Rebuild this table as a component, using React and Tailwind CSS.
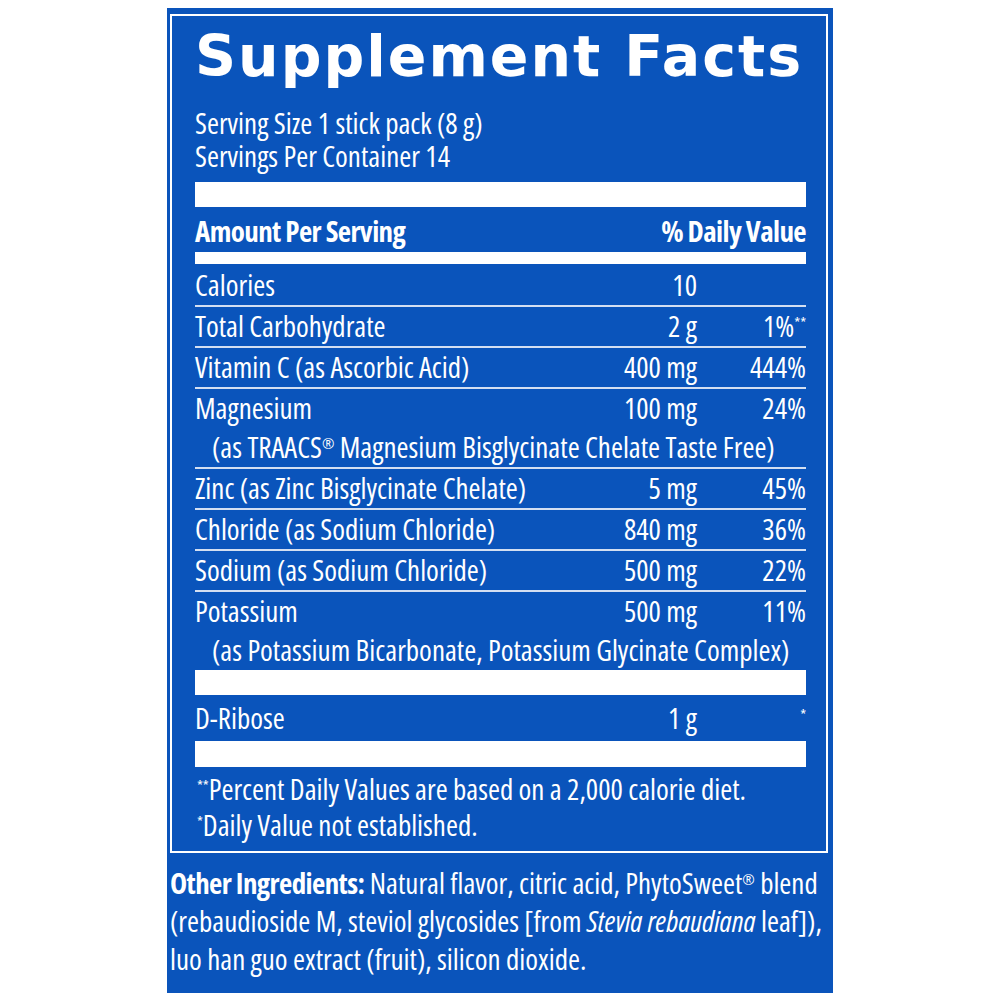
import React from 'react';

const narrow = "font-['Open_Sans',sans-serif] font-stretch-condensed";

const Sup = ({ children }) => (
    <span className="relative -top-[9px] text-[15px] leading-none">{children}</span>
);

const rows = [
    { name: 'Calories', amount: '10', dv: '' },
    { name: 'Total Carbohydrate', amount: '2 g', dv: <>1%<Sup>**</Sup></> },
    { name: 'Vitamin C (as Ascorbic Acid)', amount: '400 mg', dv: '444%' },
    {
        name: 'Magnesium',
        amount: '100 mg',
        dv: '24%',
        sub: <>(as TRAACS<Sup>®</Sup> Magnesium Bisglycinate Chelate Taste Free)</>,
    },
    { name: 'Zinc (as Zinc Bisglycinate Chelate)', amount: '5 mg', dv: '45%' },
    { name: 'Chloride (as Sodium Chloride)', amount: '840 mg', dv: '36%' },
    { name: 'Sodium (as Sodium Chloride)', amount: '500 mg', dv: '22%' },
    {
        name: 'Potassium',
        amount: '500 mg',
        dv: '11%',
        sub: <>(as Potassium Bicarbonate, Potassium Glycinate Complex)</>,
    },
];

const NutrientRow = ({ row, first }) => (
    <div className={first ? 'pt-[2px]' : 'border-t-2 border-[#d3dff2]'}>
        <div className="flex pt-[1px] leading-[36px] pb-[2px] whitespace-nowrap">
            <span className="flex-1">{row.name}</span>
            <span className="text-right">{row.amount}</span>
            <span className="w-[109px] text-right">{row.dv}</span>
        </div>
        {row.sub && <div className="pl-[17px] pt-[1px] leading-[36px] pb-[2px] whitespace-nowrap">{row.sub}</div>}
    </div>
);

export default function App() {
    return (
        <div className="w-[1000px] h-[1000px] bg-white pl-[167px] pt-[8px]">
            <div className={`w-[666px] h-[985px] bg-[#0a54bb] text-white text-[29px] pt-[6px] pl-[3px] pr-[5px] ${narrow}`}>
                {/* Facts box */}
                <div className="h-[839px] border-2 border-white pl-[23px] pr-[20px]">
                    <h1 className="pt-[10px] font-['DejaVu_Sans',sans-serif] font-stretch-normal font-bold text-[57px] leading-[60px] tracking-[2px] whitespace-nowrap">
                        Supplement Facts
                    </h1>
                    <div className="mt-[20px] leading-[33px]">
                        <p>Serving Size 1 stick pack (8 g)</p>
                        <p>Servings Per Container 14</p>
                    </div>

                    <div className="mt-[10px] h-[25px] bg-white" />
                    <div className="flex justify-between pt-[2px] leading-[43px] font-bold tracking-[-0.6px]">
                        <span>Amount Per Serving</span>
                        <span>% Daily Value</span>
                    </div>
                    <div className="h-[12px] bg-white" />

                    {rows.map((row, i) => (
                        <NutrientRow key={row.name} row={row} first={i === 0} />
                    ))}

                    <div className="h-[25px] bg-white" />
                    <div className="flex leading-[46px]">
                        <span className="flex-1">D-Ribose</span>
                        <span className="text-right">1 g</span>
                        <span className="w-[109px] text-right"><Sup>*</Sup></span>
                    </div>
                    <div className="h-[26px] bg-white" />

                    <div className="pt-[4px] pl-[2px] leading-[36px] whitespace-nowrap">
                        <p><Sup>**</Sup>Percent Daily Values are based on a 2,000 calorie diet.</p>
                        <p><Sup>*</Sup>Daily Value not established.</p>
                    </div>
                </div>

                {/* Other ingredients */}
                <div className="pt-[11px] leading-[38px] whitespace-nowrap">
                    <p>
                        <span className="font-bold tracking-[-0.6px]">Other Ingredients:</span> Natural flavor, citric acid, PhytoSweet<Sup>®</Sup> blend
                    </p>
                    <p>
                        (rebaudioside M, steviol glycosides [from <span className="italic">Stevia rebaudiana</span> leaf]),
                    </p>
                    <p>luo han guo extract (fruit), silicon dioxide.</p>
                </div>
            </div>
        </div>
    );
}
